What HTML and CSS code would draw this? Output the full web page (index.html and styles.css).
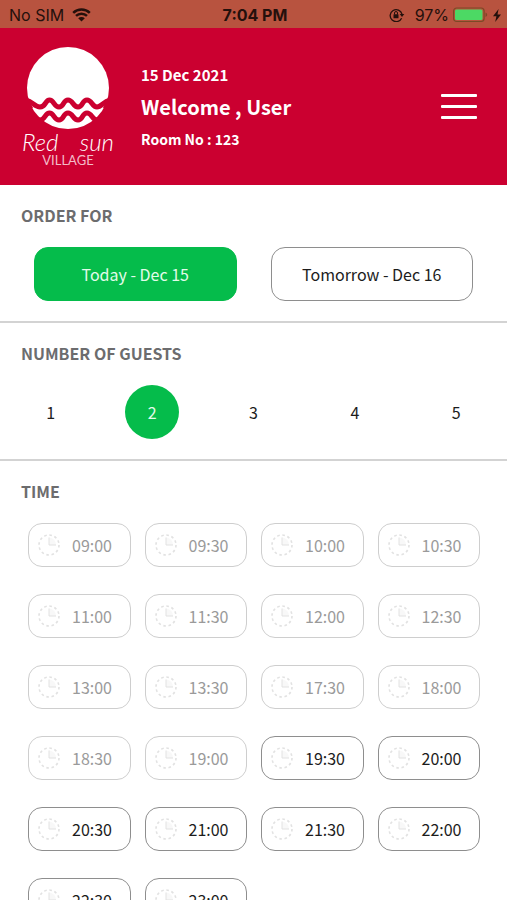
FILE: index.html
```html
<!DOCTYPE html>
<html lang="en">
<head>
<meta charset="utf-8">
<meta name="viewport" content="width=device-width, initial-scale=1">
<title>Red Sun Village</title>
<link rel="stylesheet" href="styles.css">
</head>
<body>
<svg class="sprite" aria-hidden="true">
  <symbol id="clock" viewBox="0 0 22 22">
    <circle cx="11" cy="11" r="10" fill="none" stroke="currentColor" stroke-width="1.6" stroke-dasharray="2.6 2.64"/>
    <path d="M11 3.5V11h7" fill="none" stroke="currentColor" stroke-width="1"/>
    <path d="M11 3.5a7.5 7.5 0 0 1 7 7.5h-7z" fill="currentColor" opacity=".25"/>
  </symbol>
</svg>

<div class="status">
  <div class="status-side">
    <span>No SIM</span>
    <svg width="19" height="14" viewBox="0 0 19 14" aria-hidden="true">
      <path d="M1.2 4.9a12 12 0 0 1 16.6 0M4 7.9a8 8 0 0 1 11 0" fill="none" stroke="currentColor" stroke-width="2.5"/>
      <path d="M9.5 13.6 6.2 10.3a4.7 4.7 0 0 1 6.6 0z" fill="currentColor"/>
    </svg>
  </div>
  <strong>7:04 PM</strong>
  <div class="status-side status-end">
    <svg class="lock" width="16" height="14" viewBox="0 0 16 14" aria-hidden="true">
      <path d="M12.6 10.2A6 6 0 1 1 13 6.2" fill="none" stroke="currentColor" stroke-width="1.3"/>
      <path d="M10.7 6h4.6L13 9z" fill="currentColor"/>
      <rect x="4.5" y="6.2" width="5" height="4" rx=".5" fill="currentColor"/>
      <path d="M5.5 6.5V5a1.5 1.5 0 0 1 3 0v1.5" fill="none" stroke="currentColor"/>
    </svg>
    <span>97%</span>
    <svg width="36" height="16" viewBox="0 0 36 16" aria-hidden="true">
      <rect x=".6" y="1" width="30.5" height="13.5" rx="3" fill="none" stroke="#7b4a26" stroke-width="1.2"/>
      <rect x="2" y="2.4" width="27.5" height="10.7" rx="1.5" fill="#4cd964"/>
      <path d="M32.5 5.5c2.2.8 2.2 3.7 0 4.5z" fill="#7b4a26"/>
    </svg>
    <svg width="8" height="13" viewBox="0 0 8 13" aria-hidden="true">
      <path d="M5.6 0 0 7.3h3.4L2.2 13 8 5.4H4.5z" fill="currentColor"/>
    </svg>
  </div>
</div>

<header class="header">
  <a class="brand" href="#" aria-label="Red Sun Village">
    <svg width="82" height="82" viewBox="0 0 82 82" aria-hidden="true">
      <circle cx="41" cy="41" r="41" fill="#fff"/>
      <g fill="none" stroke="#cb0030" stroke-width="5">
        <path d="M-4 53C4 52 7 60 13 60S18 53 22.500 53 27 60 32 60 36 53 41 53 46 60 51 60 55 53 60 53 65 60 70 60 78 52 86 53"/>
        <path d="M-2 65C4 65 8 73 13 73S18 66 22.500 66 27 73 32 73 36 66 41 66 46 73 51 73 55 66 60 66 65 73 70 73 76 65 84 65"/>
      </g>
      <path d="M-2 54Q3 54 6 61H0zM84 54Q79 54 76 61H84zM0 67Q9 68 17 75L8 84H-2zM82 67Q73 68 65 75L74 84H84z" fill="#cb0030"/>
    </svg>
    <span class="brand-name"><span>Red</span><span>sun</span></span>
    <span class="brand-sub">VILLAGE</span>
  </a>
  <div class="greeting">
    <p>15 Dec 2021</p>
    <h1>Welcome , User</h1>
    <p class="room">Room No : 123</p>
  </div>
  <button class="menu" type="button" aria-label="Menu"><span></span><span></span><span></span></button>
</header>

<main class="content">
  <section class="section">
    <h2>ORDER FOR</h2>
    <div class="days">
      <button class="day selected" type="button" aria-pressed="true">Today - Dec 15</button>
      <button class="day" type="button" aria-pressed="false">Tomorrow - Dec 16</button>
    </div>
  </section>

  <section class="section">
    <h2>NUMBER OF GUESTS</h2>
    <div class="guests">
      <button class="guest" type="button">1</button>
      <button class="guest selected" type="button" aria-pressed="true">2</button>
      <button class="guest" type="button">3</button>
      <button class="guest" type="button">4</button>
      <button class="guest" type="button">5</button>
    </div>
  </section>

  <section class="section">
    <h2>TIME</h2>
    <div class="slots">
      <button class="slot" type="button" disabled><svg class="clock"><use href="#clock"/></svg>09:00</button>
      <button class="slot" type="button" disabled><svg class="clock"><use href="#clock"/></svg>09:30</button>
      <button class="slot" type="button" disabled><svg class="clock"><use href="#clock"/></svg>10:00</button>
      <button class="slot" type="button" disabled><svg class="clock"><use href="#clock"/></svg>10:30</button>
      <button class="slot" type="button" disabled><svg class="clock"><use href="#clock"/></svg>11:00</button>
      <button class="slot" type="button" disabled><svg class="clock"><use href="#clock"/></svg>11:30</button>
      <button class="slot" type="button" disabled><svg class="clock"><use href="#clock"/></svg>12:00</button>
      <button class="slot" type="button" disabled><svg class="clock"><use href="#clock"/></svg>12:30</button>
      <button class="slot" type="button" disabled><svg class="clock"><use href="#clock"/></svg>13:00</button>
      <button class="slot" type="button" disabled><svg class="clock"><use href="#clock"/></svg>13:30</button>
      <button class="slot" type="button" disabled><svg class="clock"><use href="#clock"/></svg>17:30</button>
      <button class="slot" type="button" disabled><svg class="clock"><use href="#clock"/></svg>18:00</button>
      <button class="slot" type="button" disabled><svg class="clock"><use href="#clock"/></svg>18:30</button>
      <button class="slot" type="button" disabled><svg class="clock"><use href="#clock"/></svg>19:00</button>
      <button class="slot" type="button"><svg class="clock"><use href="#clock"/></svg>19:30</button>
      <button class="slot" type="button"><svg class="clock"><use href="#clock"/></svg>20:00</button>
      <button class="slot" type="button"><svg class="clock"><use href="#clock"/></svg>20:30</button>
      <button class="slot" type="button"><svg class="clock"><use href="#clock"/></svg>21:00</button>
      <button class="slot" type="button"><svg class="clock"><use href="#clock"/></svg>21:30</button>
      <button class="slot" type="button"><svg class="clock"><use href="#clock"/></svg>22:00</button>
      <button class="slot" type="button"><svg class="clock"><use href="#clock"/></svg>22:30</button>
      <button class="slot" type="button"><svg class="clock"><use href="#clock"/></svg>23:00</button>
    </div>
  </section>
</main>
</body>
</html>
```
FILE: styles.css
```css
* {
  box-sizing: border-box;
}

body {
  display: flex;
  flex-direction: column;
  height: 100vh;
  margin: 0;
  background: #fff;
  color: #1c1c1c;
  font-family: "Noto Sans CJK SC", sans-serif;
  font-size: 16px;
  line-height: 24px;
}

h1,
h2,
p {
  margin: 0;
}

button {
  padding: 0;
  border: 0;
  background: none;
  color: inherit;
  font: inherit;
  cursor: pointer;
}

.sprite {
  display: none;
}

/* Status bar */
.status {
  display: flex;
  flex: none;
  align-items: center;
  padding: 2px 6px 0 9px;
  height: 28px;
  background: #b8533f;
  color: #24100c;
  font-family: Inter, sans-serif;
  font-size: 16px;
}

.status-side {
  display: flex;
  flex: 1;
  align-items: center;
  gap: 8px;
}

.status-end {
  justify-content: flex-end;
  gap: 4px;
}

.lock {
  margin-right: 6px;
}

/* Header */
.header {
  display: flex;
  flex: none;
  align-items: center;
  padding: 19px 30px 19px 22px;
  background: #cb0030;
  color: #fff;
}

.brand {
  display: flex;
  flex-direction: column;
  align-items: center;
  width: 92px;
  color: inherit;
  text-decoration: none;
}

.brand-name {
  display: flex;
  justify-content: space-between;
  align-self: stretch;
  font-family: Lato, sans-serif;
  font-size: 24px;
  font-style: italic;
  font-weight: 300;
  line-height: 25px;
}

.brand-sub {
  color: #f3bcc8;
  font-family: Lato, sans-serif;
  font-size: 13px;
  line-height: 12px;
}

.greeting {
  flex: 1;
  margin-left: 27px;
  font-size: 15px;
  font-weight: 700;
}

.greeting h1 {
  margin: 4px 0;
  font-size: 20px;
  line-height: 32px;
}

.greeting .room {
  font-size: 14px;
}

.menu {
  display: grid;
  gap: 8px;
  width: 36px;
}

.menu span {
  height: 3px;
  border-radius: 1px;
  background: #fff;
}

/* Booking form */
.content {
  flex: 1;
  min-height: 0;
  overflow-y: auto;
  scrollbar-width: none;
}

.section {
  padding: 18px 0 20px;
  border-bottom: 2px solid #d3d3d3;
}

.section:last-child {
  border-bottom: 0;
}

.section h2 {
  margin: 0 21px 20px;
  color: #6c6c6e;
  font-size: 16px;
  font-weight: 700;
  line-height: 24px;
}

.days {
  display: grid;
  grid-template-columns: 1fr 1fr;
  gap: 34px;
  padding: 0 34px;
}

.day {
  height: 54px;
  border: 1px solid #8e8e8e;
  border-radius: 14px;
}

.guests {
  display: grid;
  grid-template-columns: repeat(5, 1fr);
  justify-items: center;
}

.guest {
  width: 54px;
  height: 54px;
  border-radius: 50%;
}

.selected {
  border-color: #05bc4b;
  background: #05bc4b;
  color: #e2fbe9;
}

.slots {
  display: grid;
  grid-template-columns: repeat(4, 1fr);
  gap: 27px 14px;
  padding: 0 27px 0 28px;
}

.slot {
  display: flex;
  align-items: center;
  gap: 12px;
  height: 44px;
  padding-left: 9px;
  border: 1px solid #8e8e8e;
  border-radius: 14px;
}

.slot:disabled {
  border-color: #cecece;
  color: #9a9a9a;
  cursor: default;
}

.clock {
  width: 22px;
  height: 22px;
  color: #e2e2e2;
}
```
